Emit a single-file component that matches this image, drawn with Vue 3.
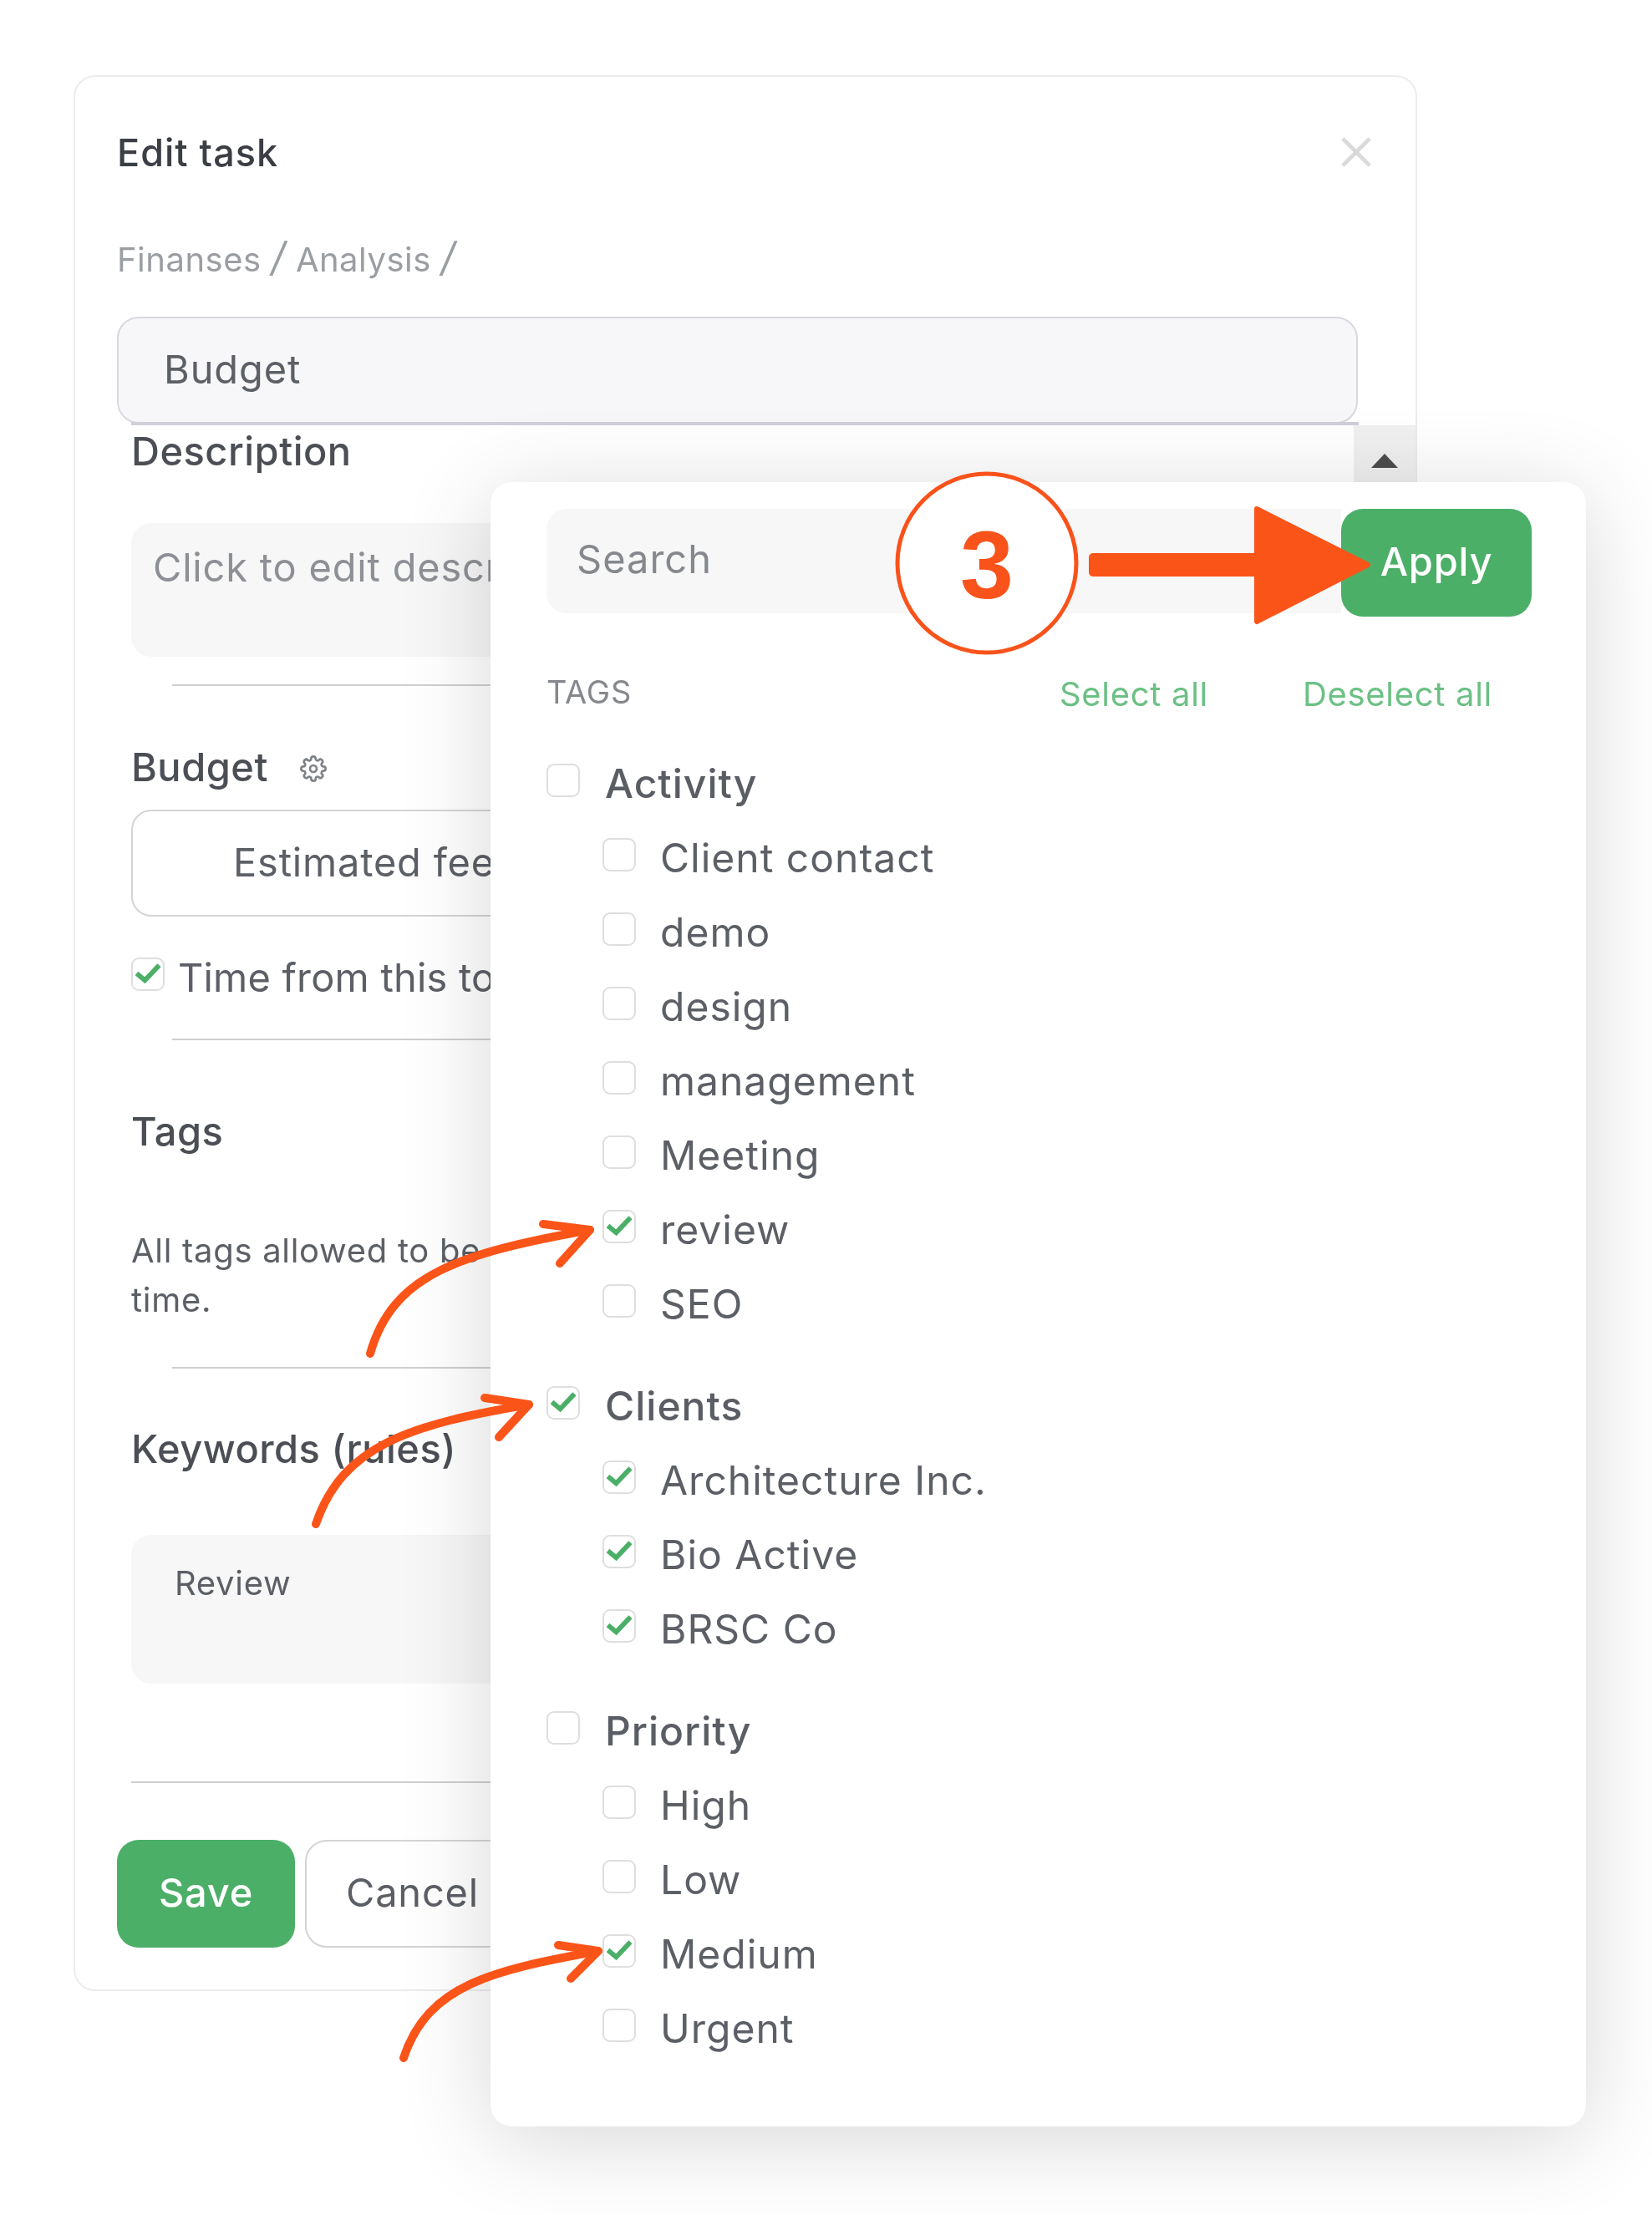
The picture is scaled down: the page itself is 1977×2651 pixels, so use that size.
<template>
  <div class="page">
    <section class="card">
      <header class="card-head">
        <h2>Edit task</h2>
        <svg class="close" viewBox="0 0 40 40"><path d="M3 3 37 37M37 3 3 37" /></svg>
      </header>
      <p class="crumbs">Finanses <i>/</i> Analysis <i>/</i></p>
      <div class="title-input">Budget</div>
      <div class="title-line"></div>

      <div class="scroll-area">
        <div class="scrollbar"><span class="scroll-up"></span></div>
        <h3 class="desc-label">Description</h3>
        <div class="soft-box desc-box">Click to edit descr</div>
        <hr class="rule" />

        <div class="budget-label">
          <h3>Budget</h3>
          <svg class="gear" viewBox="0 0 24 24">
            <circle cx="12" cy="12" r="3" />
            <path d="M19.4 15a1.65 1.65 0 0 0 .33 1.82l.06.06a2 2 0 0 1-2.83 2.83l-.06-.06a1.65 1.65 0 0 0-1.82-.33 1.65 1.65 0 0 0-1 1.51V21a2 2 0 0 1-4 0v-.09A1.65 1.65 0 0 0 9 19.4a1.65 1.65 0 0 0-1.82.33l-.06.06a2 2 0 0 1-2.83-2.83l.06-.06a1.65 1.65 0 0 0 .33-1.82 1.65 1.65 0 0 0-1.51-1H3a2 2 0 0 1 0-4h.09A1.65 1.65 0 0 0 4.6 9a1.65 1.65 0 0 0-.33-1.82l-.06-.06a2 2 0 0 1 2.83-2.83l.06.06a1.65 1.65 0 0 0 1.82.33H9a1.65 1.65 0 0 0 1-1.51V3a2 2 0 0 1 4 0v.09a1.65 1.65 0 0 0 1 1.51 1.65 1.65 0 0 0 1.82-.33l.06-.06a2 2 0 0 1 2.83 2.83l-.06.06a1.65 1.65 0 0 0-.33 1.82V9a1.65 1.65 0 0 0 1.51 1H21a2 2 0 0 1 0 4h-.09a1.65 1.65 0 0 0-1.51 1z" />
          </svg>
        </div>
        <div class="fee-input">Estimated fee</div>
        <label class="time-row">
          <span class="box">
            <svg viewBox="0 0 40 40"><path d="M5 19 16 28 35 8" /></svg>
          </span>
          Time from this to
        </label>
        <hr class="rule rule-time" />

        <h3 class="tags-label">Tags</h3>
        <p class="tags-note">All tags allowed to be<br />time.</p>
        <hr class="rule rule-tags" />

        <h3 class="keywords-label">Keywords (rules)</h3>
        <div class="soft-box keywords-box">Review</div>
        <hr class="rule rule-wide" />
      </div>

      <footer class="actions">
        <button class="btn-save">Save</button>
        <button class="btn-cancel">Cancel</button>
      </footer>
    </section>

    <section class="popover">
      <div class="search-row">
        <div class="search">Search</div>
        <button class="btn-apply">Apply</button>
      </div>
      <div class="tag-head">
        <span class="tag-title">TAGS</span>
        <a class="select-all">Select all</a>
        <a class="deselect-all">Deselect all</a>
      </div>
      <div v-for="group in groups" :key="group.name" class="group">
        <div class="row row-head">
          <span class="box">
            <svg v-if="group.checked" viewBox="0 0 40 40"><path d="M5 19 16 28 35 8" /></svg>
          </span>
          <span>{{ group.name }}</span>
        </div>
        <div v-for="item in group.items" :key="item.name" class="row row-child">
          <span class="box">
            <svg v-if="item.checked" viewBox="0 0 40 40"><path d="M5 19 16 28 35 8" /></svg>
          </span>
          <span>{{ item.name }}</span>
        </div>
      </div>
    </section>

    <!-- annotation layer, drawn on top of the screenshot -->
    <svg class="notes" viewBox="0 0 1977 2651">
      <circle class="ring" cx="1181" cy="674" r="107" />
      <text class="step" x="1181" y="716">3</text>
      <rect class="big-stem" x="1303" y="662" width="210" height="28" rx="5" />
      <path class="big-head" d="M1504 609 1637 676 1504 744Z" />
      <g class="curve">
        <path d="M443 1620C470 1525 550 1500 706 1472" />
        <path d="M650 1465 706 1472 670 1512" />
        <path d="M378 1824C410 1730 490 1705 633 1681" />
        <path d="M580 1673 633 1681 597 1720" />
        <path d="M483 2463C512 2375 590 2358 716 2335" />
        <path d="M668 2328 716 2335 683 2368" />
      </g>
    </svg>
  </div>
</template>

<script setup>
const pick = (names, checked = []) =>
  names.map((name) => ({ name, checked: checked.includes(name) }));

const groups = [
  {
    name: "Activity",
    checked: false,
    items: pick(["Client contact", "demo", "design", "management", "Meeting", "review", "SEO"], ["review"]),
  },
  {
    name: "Clients",
    checked: true,
    items: pick(["Architecture Inc.", "Bio Active", "BRSC Co"], ["Architecture Inc.", "Bio Active", "BRSC Co"]),
  },
  {
    name: "Priority",
    checked: false,
    items: pick(["High", "Low", "Medium", "Urgent"], ["Medium"]),
  },
];
</script>

<style>
body {
  background: #fff;
}
</style>

<style scoped>
.page {
  position: relative;
  width: 1977px;
  height: 2651px;
  padding: 90px 0 0 88px;
  box-sizing: border-box;
  overflow: hidden;
  font-family: Inter, "Noto Sans", sans-serif;
  color: #5c6066;
}

h2,
h3,
p,
hr {
  margin: 0;
}

.card {
  position: relative;
  width: 1608px;
  height: 2293px;
  box-sizing: border-box;
  padding: 60px 0 0 50px;
  border: 2px solid #ececec;
  border-radius: 26px;
  filter: blur(0.6px);
}

.card-head {
  display: flex;
  justify-content: space-between;
  align-items: center;
  width: 1502px;
  height: 60px;
}

.card-head h2 {
  font-size: 45px;
  font-weight: 500;
  letter-spacing: 1px;
  color: #3b3f45;
}

.close {
  width: 38px;
  height: 38px;
}

.close path {
  fill: none;
  stroke: #d9d9d9;
  stroke-width: 5;
}

.crumbs {
  margin-top: 71px;
  font-size: 40px;
  letter-spacing: 0.5px;
  line-height: 50px;
  color: #9a9ea3;
}

.crumbs i {
  font-size: 48px;
}

.title-input {
  width: 1485px;
  height: 128px;
  margin-top: 43px;
  box-sizing: border-box;
  padding: 0 54px;
  background: #f7f7f9;
  border: 2px solid #d8d9e0;
  border-radius: 26px;
  font-size: 47px;
  letter-spacing: 0.9px;
  line-height: 122px;
}

.title-line {
  width: 1469px;
  height: 4px;
  margin: -2px 0 0 17px;
  background: #cfd0d8;
}

.scroll-area {
  position: relative;
  padding-left: 17px;
}

.scrollbar {
  position: absolute;
  top: 0;
  right: 0;
  width: 74px;
  height: 110px;
  background: #f0f0f0;
}

.scroll-up {
  position: absolute;
  top: 34px;
  left: 21px;
  border: 16px solid transparent;
  border-top: 0;
  border-bottom: 17px solid #4d4d4d;
}

.scroll-area h3 {
  font-size: 47px;
  font-weight: 500;
  letter-spacing: 0.5px;
  line-height: 60px;
  color: #4b4f55;
}

.desc-label {
  padding-top: 1px;
}

.soft-box {
  width: 900px;
  box-sizing: border-box;
  background: #f7f7f7;
  border-radius: 24px;
}

.desc-box {
  height: 160px;
  margin-top: 56px;
  padding: 23px 26px;
  font-size: 47px;
  letter-spacing: 0.8px;
  line-height: 60px;
  color: #8d9095;
}

.rule {
  width: 900px;
  height: 2px;
  margin: 33px 0 0 49px;
  border: 0;
  background: #cfcfcf;
}

.budget-label {
  display: flex;
  align-items: center;
  gap: 38px;
  margin-top: 67px;
}

.gear {
  width: 32px;
  height: 32px;
  margin-top: 4px;
}

.gear * {
  fill: none;
  stroke: #7f8287;
  stroke-width: 2;
}

.fee-input {
  width: 900px;
  height: 128px;
  margin-top: 21px;
  box-sizing: border-box;
  padding-left: 120px;
  border: 2px solid #d4d4d4;
  border-radius: 24px;
  font-size: 47px;
  letter-spacing: 0.8px;
  line-height: 122px;
}

.time-row {
  display: flex;
  align-items: center;
  gap: 16px;
  height: 60px;
  margin-top: 42px;
  font-size: 47px;
  letter-spacing: 0.2px;
}

.box {
  flex: none;
  width: 40px;
  height: 40px;
  box-sizing: border-box;
  margin-top: -7px;
  border: 2px solid #dedede;
  border-radius: 9px;
  background: #fff;
}

.box svg {
  display: block;
  width: 36px;
  height: 36px;
}

.box path {
  fill: none;
  stroke: #4caf67;
  stroke-width: 6.5;
}

.rule-time {
  margin-top: 44px;
}

.tags-label {
  margin-top: 79px;
}

.tags-note {
  margin-top: 83px;
  font-size: 40px;
  letter-spacing: 0.7px;
  line-height: 59px;
}

.rule-tags {
  margin-top: 51px;
}

.keywords-label {
  margin-top: 66px;
}

.keywords-box {
  height: 178px;
  margin-top: 73px;
  padding: 34px 52px;
  font-size: 40px;
  letter-spacing: 0.7px;
  line-height: 48px;
}

.rule-wide {
  width: 950px;
  margin: 117px 0 0;
}

.actions {
  display: flex;
  gap: 12px;
  margin-top: 68px;
}

.actions button,
.btn-apply {
  box-sizing: border-box;
  font-family: inherit;
  border-radius: 26px;
  font-size: 47px;
  font-weight: 500;
  letter-spacing: 0.8px;
}

.btn-save,
.btn-apply {
  padding-bottom: 5px;
  border: 0;
  background: #4caf67;
  color: #fff;
}

.btn-save {
  width: 213px;
  height: 129px;
}

.btn-cancel {
  width: 340px;
  height: 129px;
  padding: 0 0 5px 47px;
  border: 2px solid #d4d4d4;
  background: #fff;
  color: #5c6066;
  text-align: left;
}

.actions .btn-cancel {
  font-weight: 400;
}

.popover {
  position: absolute;
  top: 577px;
  left: 587px;
  width: 1311px;
  height: 1968px;
  box-sizing: border-box;
  padding: 32px 65px 0 67px;
  background: #fff;
  border-radius: 26px;
  box-shadow: 0 16px 110px rgba(0, 0, 0, 0.16);
  filter: blur(0.6px);
}

.search-row {
  display: flex;
}

.search {
  flex: 1;
  height: 125px;
  box-sizing: border-box;
  padding-left: 36px;
  background: #f7f7f7;
  border-radius: 24px 0 0 24px;
  font-size: 47px;
  letter-spacing: 1px;
  line-height: 120px;
  color: #85888d;
}

.btn-apply {
  width: 228px;
  height: 129px;
}

.tag-head {
  display: flex;
  align-items: center;
  height: 60px;
  margin: 60px 0 34px;
}

.tag-title {
  font-size: 38px;
  letter-spacing: 0.8px;
  color: #85888d;
}

.select-all,
.deselect-all {
  padding-top: 5px;
  font-size: 40px;
  letter-spacing: 0.7px;
  color: #6cc084;
}

.select-all {
  margin-left: auto;
}

.deselect-all {
  margin: 0 47px 0 113px;
}

.group {
  margin-bottom: 32px;
}

.row {
  display: flex;
  align-items: center;
  font-size: 48px;
  letter-spacing: 1px;
}

.row-head {
  gap: 30px;
  height: 90px;
  font-weight: 500;
  color: #5a5e64;
}

.row-child {
  gap: 29px;
  height: 89px;
  padding-left: 67px;
}

.notes {
  position: absolute;
  top: 0;
  left: 0;
  width: 1977px;
  height: 2651px;
  pointer-events: none;
}

.ring {
  fill: #fff;
  stroke: #f9521b;
  stroke-width: 5;
}

.step {
  font-family: "Liberation Sans", sans-serif;
  font-size: 115px;
  font-weight: 700;
  text-anchor: middle;
  fill: #f9521b;
}

.big-stem {
  fill: #fb5419;
}

.big-head {
  fill: #fb5419;
  stroke: #fb5419;
  stroke-width: 6;
  stroke-linejoin: round;
}

.curve path {
  fill: none;
  stroke: #fb5419;
  stroke-width: 10;
  stroke-linecap: round;
  stroke-linejoin: round;
}
</style>
